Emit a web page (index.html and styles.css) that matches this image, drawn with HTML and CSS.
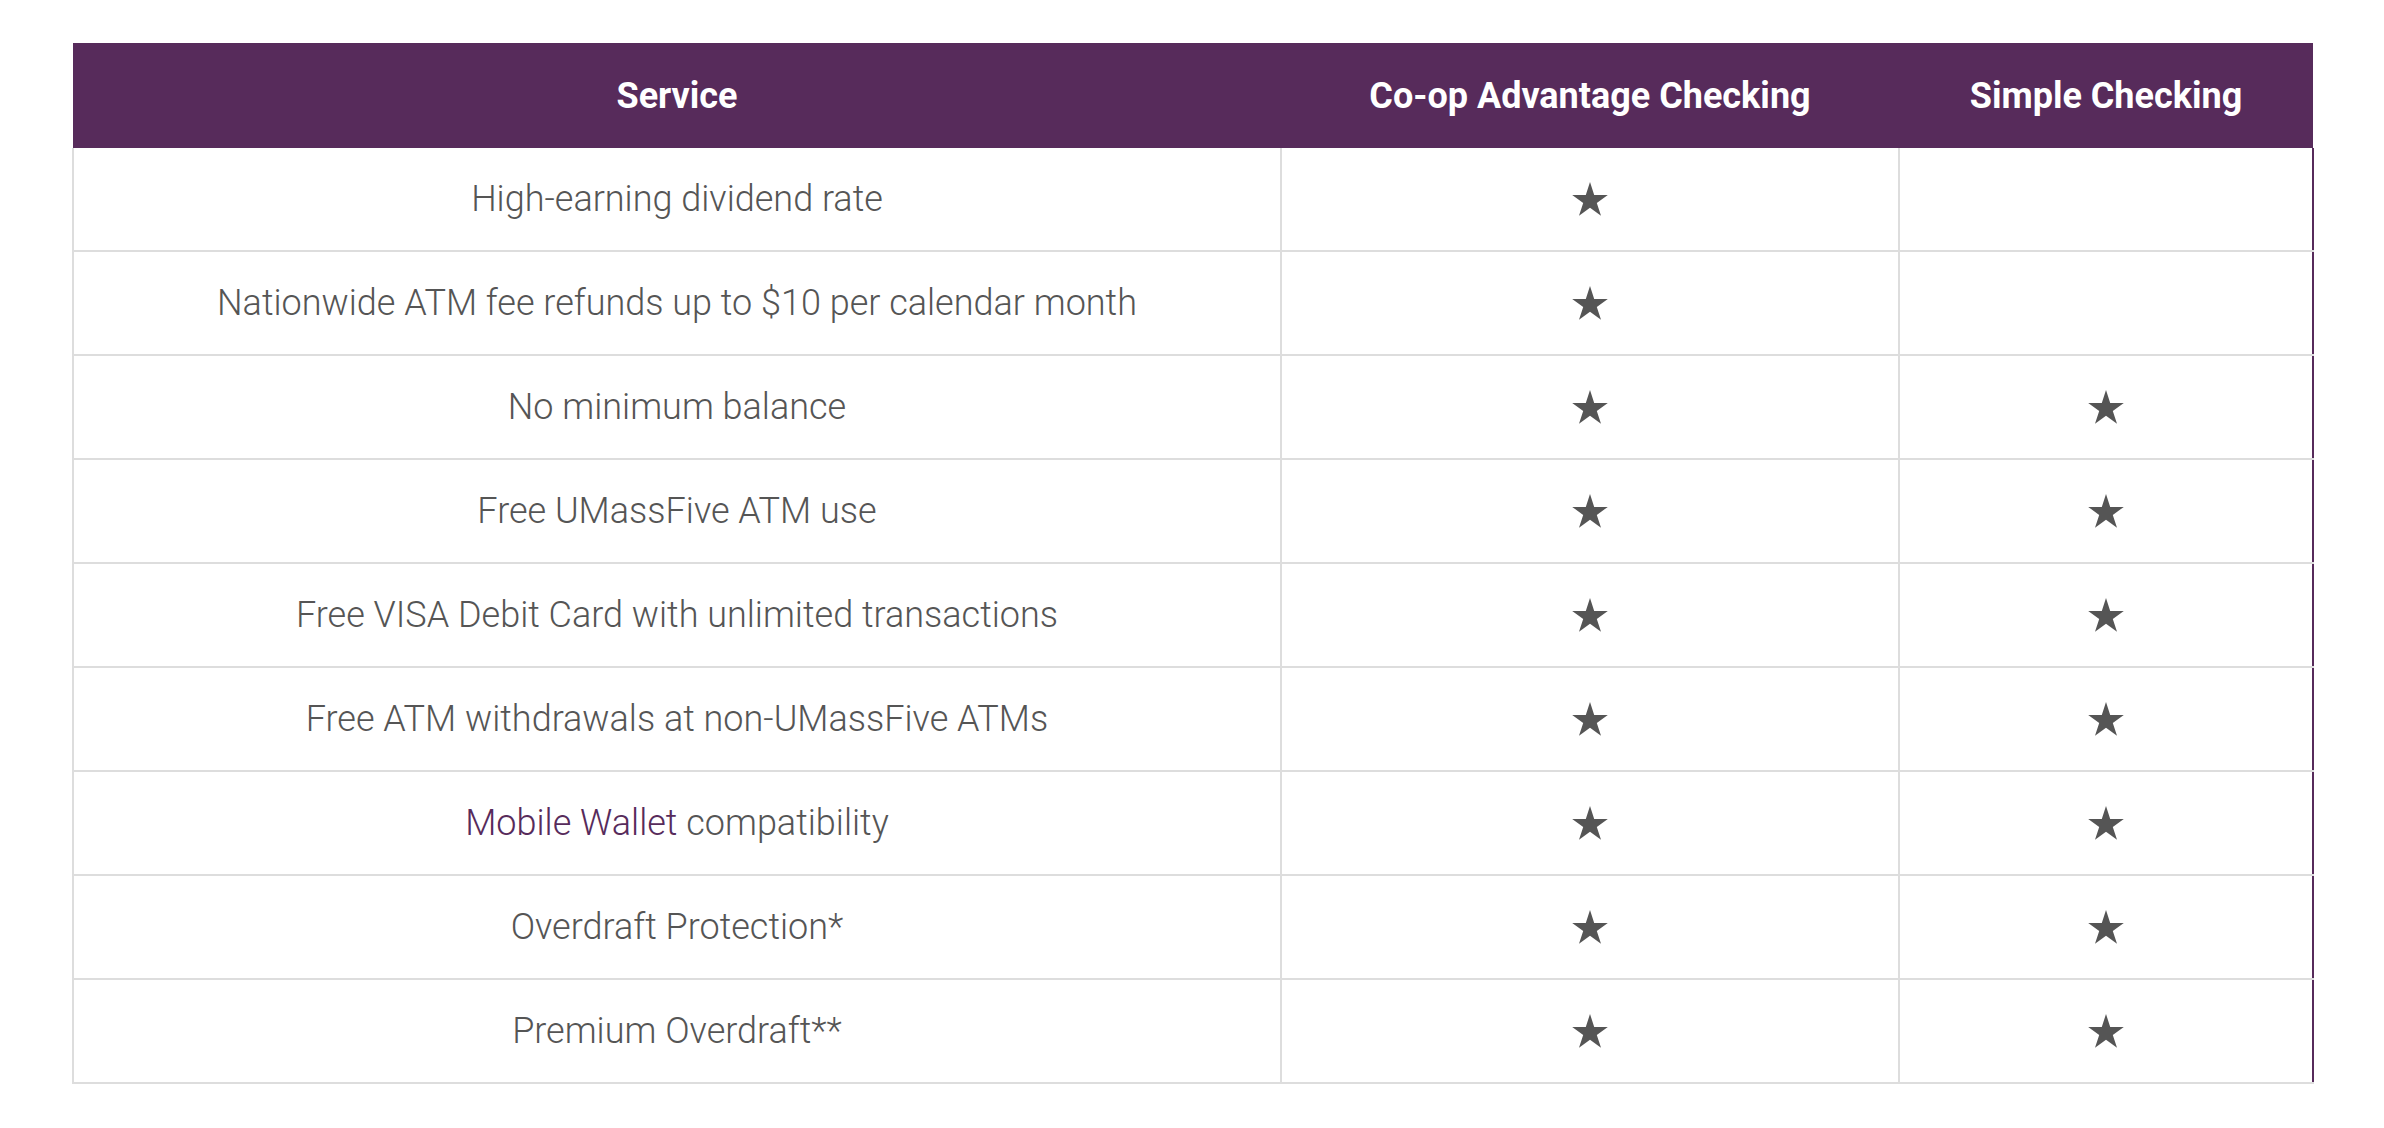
FILE: index.html
```html
<!DOCTYPE html>
<html lang="en">
<head>
<meta charset="utf-8">
<title>Checking comparison</title>
<link rel="stylesheet" href="styles.css">
</head>
<body>
<div class="page">
  <table class="compare">
    <colgroup>
      <col class="c-service">
      <col class="c-coop">
      <col class="c-simple">
    </colgroup>
    <thead>
      <tr>
        <th>Service</th>
        <th>Co-op Advantage Checking</th>
        <th class="last">Simple Checking</th>
      </tr>
    </thead>
    <tbody>
      <tr>
        <td>High-earning dividend rate</td>
        <td><svg class="star" viewBox="0 0 36 34"><polygon points="18,0 22.2,12.9 35.8,12.9 24.8,20.9 29,33.8 18,25.8 7,33.8 11.2,20.9 0.2,12.9 13.8,12.9"/></svg></td>
        <td class="last"></td>
      </tr>
      <tr>
        <td>Nationwide ATM fee refunds up to $10 per calendar month</td>
        <td><svg class="star" viewBox="0 0 36 34"><polygon points="18,0 22.2,12.9 35.8,12.9 24.8,20.9 29,33.8 18,25.8 7,33.8 11.2,20.9 0.2,12.9 13.8,12.9"/></svg></td>
        <td class="last"></td>
      </tr>
      <tr>
        <td>No minimum balance</td>
        <td><svg class="star" viewBox="0 0 36 34"><polygon points="18,0 22.2,12.9 35.8,12.9 24.8,20.9 29,33.8 18,25.8 7,33.8 11.2,20.9 0.2,12.9 13.8,12.9"/></svg></td>
        <td class="last"><svg class="star" viewBox="0 0 36 34"><polygon points="18,0 22.2,12.9 35.8,12.9 24.8,20.9 29,33.8 18,25.8 7,33.8 11.2,20.9 0.2,12.9 13.8,12.9"/></svg></td>
      </tr>
      <tr>
        <td>Free UMassFive ATM use</td>
        <td><svg class="star" viewBox="0 0 36 34"><polygon points="18,0 22.2,12.9 35.8,12.9 24.8,20.9 29,33.8 18,25.8 7,33.8 11.2,20.9 0.2,12.9 13.8,12.9"/></svg></td>
        <td class="last"><svg class="star" viewBox="0 0 36 34"><polygon points="18,0 22.2,12.9 35.8,12.9 24.8,20.9 29,33.8 18,25.8 7,33.8 11.2,20.9 0.2,12.9 13.8,12.9"/></svg></td>
      </tr>
      <tr>
        <td>Free VISA Debit Card with unlimited transactions</td>
        <td><svg class="star" viewBox="0 0 36 34"><polygon points="18,0 22.2,12.9 35.8,12.9 24.8,20.9 29,33.8 18,25.8 7,33.8 11.2,20.9 0.2,12.9 13.8,12.9"/></svg></td>
        <td class="last"><svg class="star" viewBox="0 0 36 34"><polygon points="18,0 22.2,12.9 35.8,12.9 24.8,20.9 29,33.8 18,25.8 7,33.8 11.2,20.9 0.2,12.9 13.8,12.9"/></svg></td>
      </tr>
      <tr>
        <td>Free ATM withdrawals at non-UMassFive ATMs</td>
        <td><svg class="star" viewBox="0 0 36 34"><polygon points="18,0 22.2,12.9 35.8,12.9 24.8,20.9 29,33.8 18,25.8 7,33.8 11.2,20.9 0.2,12.9 13.8,12.9"/></svg></td>
        <td class="last"><svg class="star" viewBox="0 0 36 34"><polygon points="18,0 22.2,12.9 35.8,12.9 24.8,20.9 29,33.8 18,25.8 7,33.8 11.2,20.9 0.2,12.9 13.8,12.9"/></svg></td>
      </tr>
      <tr>
        <td><a class="link" href="#">Mobile Wallet</a> compatibility</td>
        <td><svg class="star" viewBox="0 0 36 34"><polygon points="18,0 22.2,12.9 35.8,12.9 24.8,20.9 29,33.8 18,25.8 7,33.8 11.2,20.9 0.2,12.9 13.8,12.9"/></svg></td>
        <td class="last"><svg class="star" viewBox="0 0 36 34"><polygon points="18,0 22.2,12.9 35.8,12.9 24.8,20.9 29,33.8 18,25.8 7,33.8 11.2,20.9 0.2,12.9 13.8,12.9"/></svg></td>
      </tr>
      <tr>
        <td>Overdraft Protection*</td>
        <td><svg class="star" viewBox="0 0 36 34"><polygon points="18,0 22.2,12.9 35.8,12.9 24.8,20.9 29,33.8 18,25.8 7,33.8 11.2,20.9 0.2,12.9 13.8,12.9"/></svg></td>
        <td class="last"><svg class="star" viewBox="0 0 36 34"><polygon points="18,0 22.2,12.9 35.8,12.9 24.8,20.9 29,33.8 18,25.8 7,33.8 11.2,20.9 0.2,12.9 13.8,12.9"/></svg></td>
      </tr>
      <tr>
        <td>Premium Overdraft**</td>
        <td><svg class="star" viewBox="0 0 36 34"><polygon points="18,0 22.2,12.9 35.8,12.9 24.8,20.9 29,33.8 18,25.8 7,33.8 11.2,20.9 0.2,12.9 13.8,12.9"/></svg></td>
        <td class="last"><svg class="star" viewBox="0 0 36 34"><polygon points="18,0 22.2,12.9 35.8,12.9 24.8,20.9 29,33.8 18,25.8 7,33.8 11.2,20.9 0.2,12.9 13.8,12.9"/></svg></td>
      </tr>
    </tbody>
  </table>
</div>
</body>
</html>
```

FILE: styles.css
```css
html, body {
  margin: 0;
  padding: 0;
  background: #ffffff;
}

body {
  font-family: Roboto, "Liberation Sans", Arial, sans-serif;
}

.page {
  padding: 43px 72px 0 72px;
}

.compare {
  width: 100%;
  border-collapse: collapse;
  table-layout: fixed;
}

.c-service { width: 1208px; }
.c-coop { width: 618px; }
.c-simple { width: 414px; }

.compare th {
  background: #572b5b;
  color: #ffffff;
  font-weight: 700;
  font-size: 36px;
  height: 105px;
  padding: 0;
  text-align: center;
  vertical-align: middle;
}

.compare td {
  height: 102px;
  padding: 0;
  border-left: 2px solid #dddddd;
  border-bottom: 2px solid #dddddd;
  font-weight: 300;
  font-size: 36px;
  color: #555555;
  text-align: center;
  vertical-align: middle;
}

.compare td.last {
  border-right: 2px solid #572b5b;
}

.link {
  color: #572b5b;
  text-decoration: none;
}

.star {
  display: block;
  width: 36px;
  height: 34px;
  margin: 0 auto;
  fill: #555555;
}
```
